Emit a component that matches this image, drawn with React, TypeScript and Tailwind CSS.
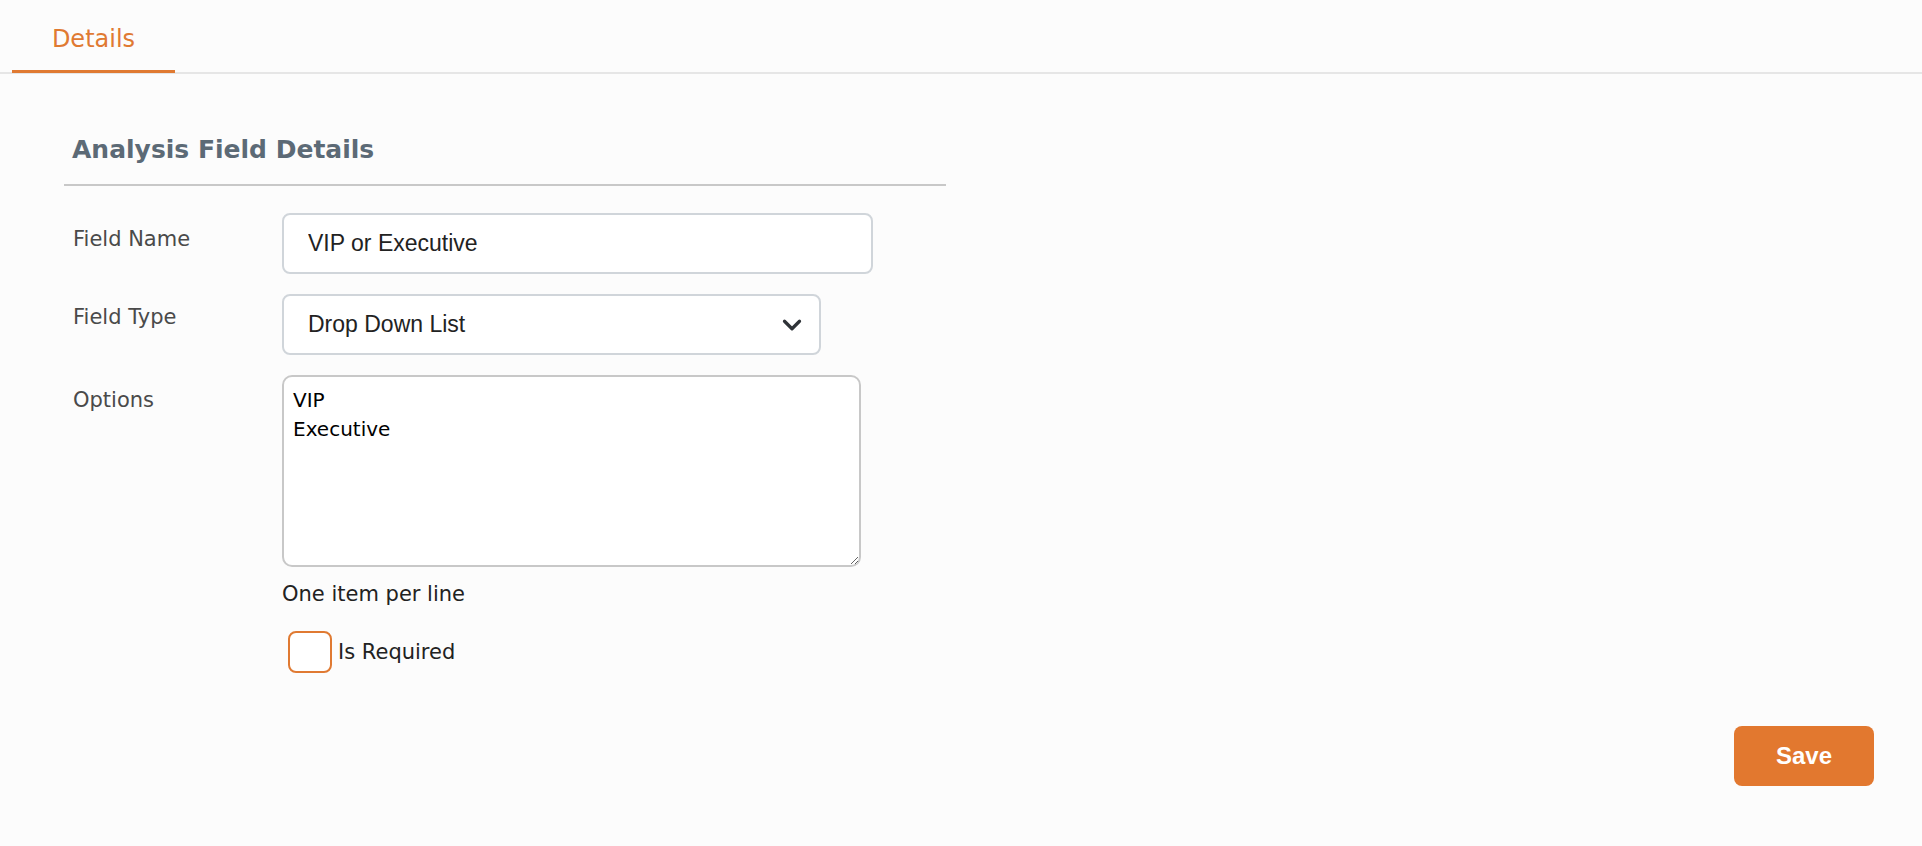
import { ChevronDown } from 'lucide-react'

const ui = "font-['DejaVu_Sans','Verdana',sans-serif]"
const arial = "font-['Liberation_Sans','Arial',sans-serif]"

function FieldLabel({ children, offset }: { children: React.ReactNode; offset: string }) {
  return (
    <div className={`w-[218px] shrink-0 pl-[9px] ${offset} text-[21px] leading-[25px] text-[#4a4a4a] ${ui}`}>
      {children}
    </div>
  )
}

export default function App() {
  return (
    <div className={`min-h-screen bg-[#fcfcfc] ${ui}`}>
      {/* Tabs */}
      <div className="flex border-b-2 border-[#e6e6e6] pl-3">
        <div className="relative -mb-px flex h-[73px] w-[163px] justify-center border-b-[3px] border-[#e07a32] pt-[25px]">
          <span className="text-[24px] leading-[28px] text-[#e07a32]">Details</span>
        </div>
      </div>

      <div className="ml-[64px] w-[882px]">
        {/* Section header */}
        <div className="border-b-2 border-[#c8c8c8] pl-2 pt-[61px] pb-[19px]">
          <h2 className="text-[25px] font-bold leading-[30px] text-[#5c6a76]">Analysis Field Details</h2>
        </div>

        {/* Form */}
        <div className="mt-[27px] flex flex-col gap-5">
          <div className="flex">
            <FieldLabel offset="pt-[14px]">Field Name</FieldLabel>
            <input
              readOnly
              defaultValue="VIP or Executive"
              className={`h-[61px] w-[591px] rounded-lg border-2 border-[#d0d5da] bg-white pl-[24px] text-[23px] text-[#222] outline-none ${arial}`}
            />
          </div>

          <div className="flex">
            <FieldLabel offset="pt-[11px]">Field Type</FieldLabel>
            <div className="relative">
              <select
                defaultValue="dd"
                className={`h-[61px] w-[539px] appearance-none rounded-lg border-2 border-[#d0d5da] bg-white pl-[24px] text-[23px] text-[#222] outline-none ${arial}`}
              >
                <option value="dd">Drop Down List</option>
              </select>
              <ChevronDown
                size={30}
                strokeWidth={2.6}
                className="pointer-events-none absolute right-[14px] top-[16px] text-[#2f3338]"
              />
            </div>
          </div>

          <div className="flex">
            <FieldLabel offset="pt-[13px]">Options</FieldLabel>
            <div className="flex flex-col">
              <textarea
                readOnly
                defaultValue={'VIP\nExecutive'}
                className={`h-[192px] w-[579px] rounded-[10px] border-2 border-[#c8c8c8] bg-white px-[9px] pt-[9px] text-[20px] leading-[29px] text-black outline-none ${ui}`}
              />
              <p className="mt-[15px] text-[21px] leading-[25px] text-[#222]">One item per line</p>
              <label className="ml-[6px] mt-[24px] flex items-center gap-[6px]">
                <span className="h-[42px] w-[44px] rounded-lg border-2 border-[#e07a32] bg-white" />
                <span className="text-[21px] leading-[25px] text-[#222]">Is Required</span>
              </label>
            </div>
          </div>
        </div>
      </div>

      {/* Footer actions */}
      <div className="mt-[53px] flex justify-end pr-[48px]">
        <button
          className={`h-[60px] w-[140px] rounded-lg bg-[#e2782f] text-[24px] font-bold text-white ${arial}`}
        >
          Save
        </button>
      </div>
    </div>
  )
}
